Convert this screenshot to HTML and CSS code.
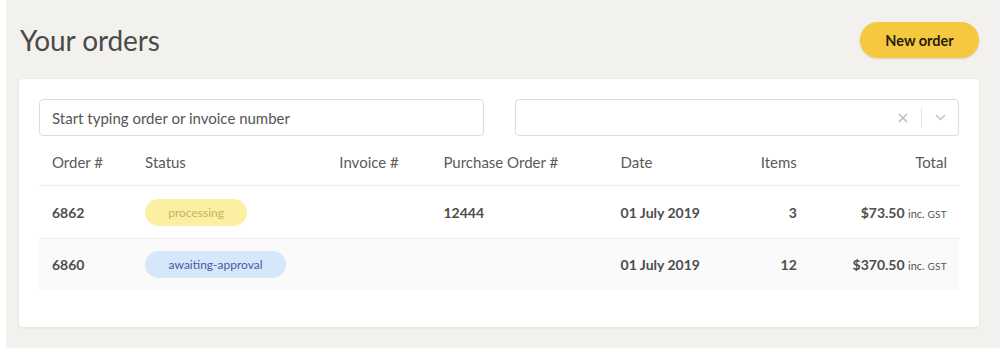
FILE: index.html
```html
<!DOCTYPE html>
<html lang="en">
<head>
  <meta charset="UTF-8">
  <title>Your orders</title>
  <link rel="stylesheet" href="styles.css">
</head>
<body>
  <div class="page">
    <div class="top">
      <h1>Your orders</h1>
      <button class="btn-new">New order</button>
    </div>
    <div class="card">
      <div class="filters">
        <input class="search" type="text" placeholder="Start typing order or invoice number">
        <div class="select">
          <span class="select-value"></span>
          <span class="select-clear">
            <svg width="10" height="10" viewBox="0 0 10 10"><path d="M1 1L9 9M9 1L1 9" stroke="#b8b8b8" stroke-width="1.4" fill="none"/></svg>
          </span>
          <span class="select-sep"></span>
          <span class="select-arrow">
            <svg width="11" height="7" viewBox="0 0 11 7"><path d="M1 1L5.5 5.5L10 1" stroke="#bdbdbd" stroke-width="1.3" fill="none"/></svg>
          </span>
        </div>
      </div>
      <table class="orders">
        <colgroup>
          <col style="width:93px">
          <col style="width:194px">
          <col style="width:104px">
          <col style="width:177px">
          <col style="width:113px">
          <col style="width:89px">
          <col style="width:149px">
        </colgroup>
        <thead>
          <tr>
            <th>Order #</th>
            <th>Status</th>
            <th>Invoice #</th>
            <th>Purchase Order #</th>
            <th>Date</th>
            <th class="num">Items</th>
            <th class="num">Total</th>
          </tr>
        </thead>
        <tbody>
          <tr>
            <td>6862</td>
            <td><span class="badge processing">processing</span></td>
            <td></td>
            <td>12444</td>
            <td>01 July 2019</td>
            <td class="num">3</td>
            <td class="num">$73.50 <span class="tax">inc. <span class="gst">GST</span></span></td>
          </tr>
          <tr class="alt">
            <td>6860</td>
            <td><span class="badge awaiting">awaiting-approval</span></td>
            <td></td>
            <td></td>
            <td>01 July 2019</td>
            <td class="num">12</td>
            <td class="num">$370.50 <span class="tax">inc. <span class="gst">GST</span></span></td>
          </tr>
        </tbody>
      </table>
    </div>
  </div>
</body>
</html>
```

FILE: styles.css
```css
body { margin: 0; background: #fff; font-family: Lato, "Liberation Sans", sans-serif; color: #333; }
.page { margin-left: 6px; height: 348px; box-sizing: border-box; padding: 22px 21px 0 13px; background: #f2f1ed; }

.top { display: flex; justify-content: space-between; align-items: center; height: 36px; padding-left: 1px; }
.top h1 { margin: 0; font-size: 28px; font-weight: 400; color: #4a4a4a; letter-spacing: -0.1px; }
.btn-new { height: 36px; width: 119px; border: none; border-radius: 18px; background: #f5c840; color: #241e0c; font-family: inherit; font-size: 14.5px; font-weight: 700; box-shadow: 0 1px 2px rgba(150, 120, 0, 0.25); }

.card { margin-top: 21px; height: 248px; box-sizing: border-box; padding: 20px 20px 0; background: #fff; border-radius: 4px; box-shadow: 0 1px 3px rgba(0, 0, 0, 0.08); }

.filters { display: grid; grid-template-columns: minmax(0, 1fr) minmax(0, 1fr); gap: 31px; }
.search, .select { width: 100%; height: 37px; box-sizing: border-box; border: 1px solid #dcdcdc; border-radius: 4px; background: #fff; }
.search { padding: 0 12px; font-family: inherit; font-size: 15px; color: #333; }
.search::placeholder { color: #555; }
.select { display: flex; align-items: center; justify-content: flex-end; padding-right: 12px; }
.select-value { flex: 1; }
.select-clear { display: flex; margin-right: 13px; }
.select-sep { width: 1px; height: 20px; background: #e2e2e2; margin-right: 13px; }
.select-arrow { display: flex; }

.orders { width: 100%; table-layout: fixed; border-collapse: collapse; margin-top: 3px; }
.orders th { height: 46px; padding: 0 13px; text-align: left; font-size: 15px; font-weight: 400; color: #5a5a5a; border-bottom: 1px solid #ececec; }
.orders td { height: 52px; padding: 0 13px; font-size: 14px; font-weight: 700; color: #4d4d4d; border-bottom: 1px solid #ececec; white-space: nowrap; }
.orders tr.alt td { height: 51px; background: #fafafa; border-bottom: none; }
.orders .num { text-align: right; }
.orders th.num:last-child, .orders td.num:last-child { padding-right: 12px; }

.badge { display: inline-block; height: 27px; line-height: 27px; padding: 0 22px; border-radius: 14px; font-size: 12px; font-weight: 400; }
.badge.processing { background: #fbf0a2; color: #c8b35e; width: 58px; text-align: center; }
.badge.awaiting { background: #d6e7fb; color: #4a57a3; width: 97px; text-align: center; }
.tax { font-size: 11px; font-weight: 400; color: #555; }
.gst { font-size: 10px; letter-spacing: 0.3px; }
```
